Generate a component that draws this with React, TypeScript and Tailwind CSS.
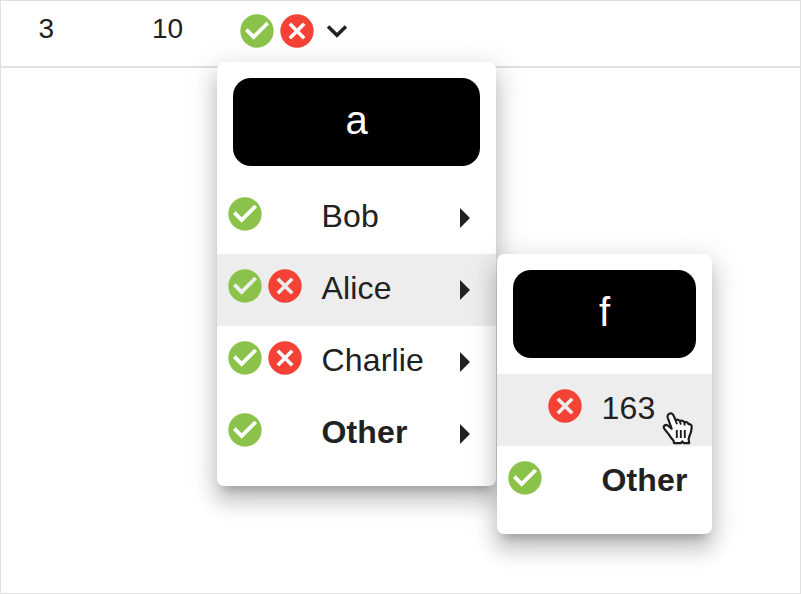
import type { ReactNode } from "react";

function CheckCircle() {
  return (
    <svg viewBox="0 0 24 24" className="size-10 shrink-0 fill-[#8bc34a]">
      <path d="M12 2C6.48 2 2 6.48 2 12s4.48 10 10 10 10-4.480 10-10S17.520 2 12 2zm-2 15.200l-5.200-5.200 1.610-1.610L10 13.970l7.590-7.590L19.200 8l-9.200 9.200z" />
    </svg>
  );
}

function CancelCircle() {
  return (
    <svg viewBox="0 0 24 24" className="size-10 shrink-0">
      <circle cx="12" cy="12" r="10" className="fill-[#f44336]" />
      <path d="M7.700 7.700l8.600 8.600M16.300 7.700l-8.600 8.600" fill="none" stroke="currentColor" strokeWidth="2.150" />
    </svg>
  );
}

function ExpandMore() {
  return (
    <svg viewBox="0 0 24 24" className="size-10 shrink-0 fill-[#212121]">
      <path d="M16.590 8.500L12 13.080 7.410 8.500 5.900 10l6.100 6.100L18.100 10z" />
    </svg>
  );
}

function HandCursor() {
  return (
    <svg viewBox="0 0 32 36" className="absolute left-[661px] top-[409px] z-30 h-9 w-8">
      <path
        d="M7 3.900c1.700-1.100 3.700-.4 4.500 1.500l2.200 5c1.100-1.100 3.300-.9 4.200.8 1.400-1.100 3.700-.6 4.400 1.200 1.800-.7 3.700 0 4.200 1.700 1.900-.4 3.300 1 3.200 3.100-.2 3.300-1 6.200-2.300 9l-.8 2.900.6 4.100H22l-1.700-1.800-1.500 1.800H12l-.4-2.500c-2.200-2.200-3.700-4.500-5.400-7.100l-3.900-4.900c-1.600-2.500.9-4.700 3.300-3.200l4 3.200-3.900-11.200C5.300 6 5.700 4.700 7 3.900z"
        fill="white"
        stroke="#1c1c1c"
        strokeWidth="2.200"
        strokeLinejoin="round"
      />
      <path
        d="M13.700 10.500l1.300 3.700M17.900 11.300l1 3.300M22.300 12.500l.5 3M14.800 20v8M18.800 20v8M22.800 20v8"
        fill="none"
        stroke="#1c1c1c"
        strokeWidth="1.900"
      />
    </svg>
  );
}

interface ItemProps {
  label: string;
  yes?: boolean;
  no?: boolean;
  active?: boolean;
  bold?: boolean;
  submenu?: boolean;
}

function MenuItem({ label, yes, no, active, bold, submenu }: ItemProps) {
  return (
    <div className={`flex h-[72px] items-start pl-2 ${active ? "bg-[#ededed]" : ""}`}>
      <div className={`flex w-20 pt-3 ${active ? "text-[#ededed]" : "text-white"}`}>
        <div className="w-10">{yes && <CheckCircle />}</div>
        <div className="w-10">{no && <CancelCircle />}</div>
      </div>
      <span
        className={`ml-4 pl-[0.5px] text-[32px] leading-[68px] tracking-[0.15px] ${bold ? "font-bold" : ""}`}
      >
        {label}
      </span>
      {submenu && (
        <span className="mt-[26px] mr-[26px] ml-auto border-y-[10px] border-l-[10px] border-y-transparent border-l-[#212121]" />
      )}
    </div>
  );
}

function Menu({ title, className, children }: { title: string; className: string; children: ReactNode }) {
  return (
    <div
      className={`absolute rounded-[7px] bg-white pb-4 shadow-[0_10px_10px_-6px_rgba(0,0,0,0.2),0_16px_20px_2px_rgba(0,0,0,0.14),0_6px_28px_4px_rgba(0,0,0,0.12)] ${className}`}
    >
      <div className="px-4 py-4">
        <div className="h-[88px] rounded-[18px] bg-black text-center text-[40px] leading-[85px] text-white">
          {title}
        </div>
      </div>
      {children}
    </div>
  );
}

export default function App() {
  return (
    <div
      className="relative h-[594px] w-[801px] overflow-hidden border border-[#e0e0e0] bg-white text-[#212121]"
      style={{ fontFamily: '"Liberation Sans", Arial, sans-serif' }}
    >
      <div className="flex h-[67px] border-b-2 border-[#e0e0e0] text-[28px] leading-[56px]">
        <span className="w-[114px] pl-[37.5px]">3</span>
        <span className="w-[122px] pl-[37px]">10</span>
        <div className="flex pt-[10px]">
          <CheckCircle />
          <div className="text-white">
            <CancelCircle />
          </div>
          <ExpandMore />
        </div>
      </div>

      <Menu title="a" className="left-[216px] top-[61px] z-10 w-[279px]">
        <MenuItem label="Bob" yes submenu />
        <MenuItem label="Alice" yes no active submenu />
        <MenuItem label="Charlie" yes no submenu />
        <MenuItem label="Other" yes bold submenu />
      </Menu>

      <Menu title="f" className="left-[496px] top-[253px] z-20 w-[215px]">
        <MenuItem label="163" no active />
        <MenuItem label="Other" yes bold />
      </Menu>

      <HandCursor />
    </div>
  );
}
